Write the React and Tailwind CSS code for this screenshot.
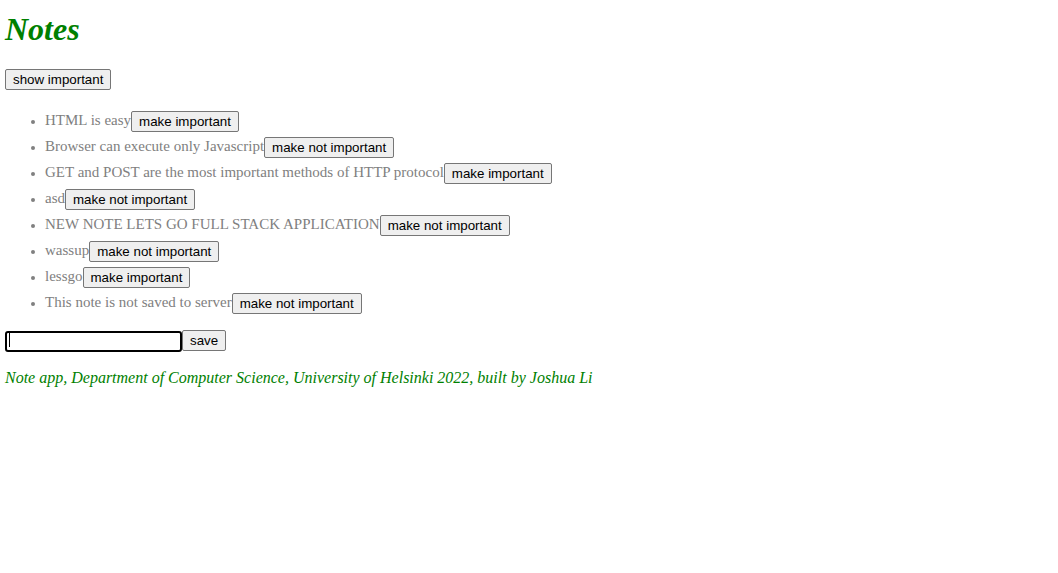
import { useState } from "react";

const notes = [
  { id: 1, content: "HTML is easy", important: false },
  { id: 2, content: "Browser can execute only Javascript", important: true },
  { id: 3, content: "GET and POST are the most important methods of HTTP protocol", important: false },
  { id: 4, content: "asd", important: true },
  { id: 5, content: "NEW NOTE LETS GO FULL STACK APPLICATION", important: true },
  { id: 6, content: "wassup", important: true },
  { id: 7, content: "lessgo", important: false },
  { id: 8, content: "This note is not saved to server", important: true },
];

const btn =
  "inline-block h-[21px] rounded-[2px] border border-[#767676] bg-[#efefef] px-[7px] align-middle font-['Liberation_Sans',Arial,sans-serif] text-[13.333px] leading-[17px] text-black";

function Note({ note }) {
  return (
    <li className="h-[26px] pt-px text-[15px] leading-[25px] text-[#808080] marker:text-[12px]">
      {note.content}
      <button type="button" className={btn}>
        {note.important ? "make not important" : "make important"}
      </button>
    </li>
  );
}

export default function App() {
  const [value, setValue] = useState("");

  return (
    <div className="min-h-[573px] bg-white pl-[5px] pt-[11px] font-['Liberation_Serif','Times_New_Roman',serif] text-[16px]">
      <h1 className="mb-[18px] text-[32px] font-bold italic leading-[37px] text-[#008000]">
        Notes
      </h1>
      <div className="h-[21px]">
        <button type="button" className={btn}>
          show important
        </button>
      </div>
      <ul className="mt-[20px] mb-[15px] list-disc pl-[40px]">
        {notes.map((note) => (
          <Note key={note.id} note={note} />
        ))}
      </ul>
      <form className="flex h-[21px] items-center" onSubmit={(e) => e.preventDefault()}>
        <div className="relative">
          <input
            value={value}
            onChange={(e) => setValue(e.target.value)}
            className="h-[21px] w-[177px] rounded-[3px] border-2 border-black bg-white px-[2px] font-['Liberation_Sans',Arial,sans-serif] text-[13.333px] outline-none"
          />
          <span className="pointer-events-none absolute left-[4px] top-[3px] h-[15px] w-px bg-black" />
        </div>
        <button type="submit" className={btn}>
          save
        </button>
      </form>
      <div className="mt-[18px] text-[16px] italic leading-[18px] text-[#008000]">
        Note app, Department of Computer Science, University of Helsinki 2022, built by Joshua Li
      </div>
    </div>
  );
}
